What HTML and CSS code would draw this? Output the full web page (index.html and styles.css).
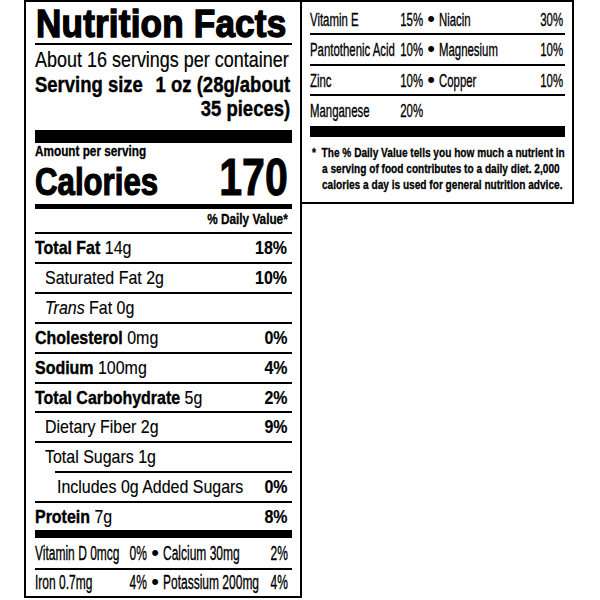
FILE: index.html
```html
<!DOCTYPE html>
<html lang="en">
<head>
<meta charset="utf-8">
<title>Nutrition Facts</title>
<link rel="stylesheet" href="styles.css">
</head>
<body>
<div class="page">
  <section class="label main">
    <h1 class="title"><span class="sx">Nutrition Facts</span></h1>
    <div class="servings"><span class="sx">About 16 servings per container</span></div>
    <div class="size">
      <span class="sx lbl">Serving size</span>
      <span class="sx r val">1 oz (28g/about<br>35 pieces)</span>
    </div>
    <div class="bar bar-lg"></div>
    <div class="cal">
      <div class="cal-left">
        <div class="amount"><span class="sx">Amount per serving</span></div>
        <div class="cal-word"><span class="sx">Calories</span></div>
      </div>
      <div class="cal-num"><span class="sx r">170</span></div>
    </div>
    <div class="bar bar-md"></div>
    <div class="dv"><span class="sx r">% Daily Value*</span></div>

    <div class="row"><span class="sx lbl"><b>Total Fat</b> 14g</span><b class="sx r pct">18%</b></div>
    <div class="row ind"><span class="sx lbl">Saturated Fat 2g</span><b class="sx r pct">10%</b></div>
    <div class="row ind"><span class="sx lbl"><i>Trans</i> Fat 0g</span></div>
    <div class="row"><span class="sx lbl"><b>Cholesterol</b> 0mg</span><b class="sx r pct">0%</b></div>
    <div class="row"><span class="sx lbl"><b>Sodium</b> 100mg</span><b class="sx r pct">4%</b></div>
    <div class="row short"><span class="sx lbl"><b>Total Carbohydrate</b> 5g</span><b class="sx r pct">2%</b></div>
    <div class="row ind"><span class="sx lbl">Dietary Fiber 2g</span><b class="sx r pct">9%</b></div>
    <div class="row ind"><span class="sx lbl">Total Sugars 1g</span></div>
    <div class="row ind2"><span class="sx lbl">Includes 0g Added Sugars</span><b class="sx r pct">0%</b></div>
    <div class="row short"><span class="sx lbl"><b>Protein</b> 7g</span><b class="sx r pct">8%</b></div>

    <div class="bar bar-sm"></div>
    <div class="vrow lv first">
      <span class="c1"><span class="sx v">Vitamin D 0mcg</span></span>
      <span class="c2"><span class="sx v r">0%</span></span>
      <span class="c3">•</span>
      <span class="c4"><span class="sx v">Calcium 30mg</span></span>
      <span class="c5"><span class="sx v r">2%</span></span>
    </div>
    <div class="vrow lv last">
      <span class="c1"><span class="sx v">Iron 0.7mg</span></span>
      <span class="c2"><span class="sx v r">4%</span></span>
      <span class="c3">•</span>
      <span class="c4"><span class="sx v">Potassium 200mg</span></span>
      <span class="c5"><span class="sx v r">4%</span></span>
    </div>
  </section>

  <section class="label side">
    <div class="vrow rv r1">
      <span class="c1"><span class="sx v">Vitamin E</span></span>
      <span class="c2"><span class="sx v r">15%</span></span>
      <span class="c3">•</span>
      <span class="c4"><span class="sx v">Niacin</span></span>
      <span class="c5"><span class="sx v r">30%</span></span>
    </div>
    <div class="vrow rv">
      <span class="c1"><span class="sx v">Pantothenic Acid</span></span>
      <span class="c2"><span class="sx v r">10%</span></span>
      <span class="c3">•</span>
      <span class="c4"><span class="sx v">Magnesium</span></span>
      <span class="c5"><span class="sx v r">10%</span></span>
    </div>
    <div class="vrow rv">
      <span class="c1"><span class="sx v">Zinc</span></span>
      <span class="c2"><span class="sx v r">10%</span></span>
      <span class="c3">•</span>
      <span class="c4"><span class="sx v">Copper</span></span>
      <span class="c5"><span class="sx v r">10%</span></span>
    </div>
    <div class="vrow rv r4">
      <span class="c1"><span class="sx v">Manganese</span></span>
      <span class="c2"><span class="sx v r">20%</span></span>
    </div>
    <div class="bar bar-side"></div>
    <div class="fn">
      <div class="fl"><span class="sx f">*&nbsp; The % Daily Value tells you how much a nutrient in</span></div>
      <div class="fl in"><span class="sx f">a serving of food contributes to a daily diet. 2,000</span></div>
      <div class="fl in"><span class="sx f">calories a day is used for general nutrition advice.</span></div>
    </div>
  </section>
</div>
</body>
</html>
```
FILE: styles.css
```css
* { box-sizing: border-box; }
html, body { margin: 0; padding: 0; background: #fff; }
body {
  font-family: "Liberation Sans", Arial, sans-serif;
  color: #000;
}
b { font-weight: 700; }

.page {
  display: flex;
  align-items: flex-start;
  padding-left: 24px;
}

.label {
  border: 2px solid #000;
}
.main {
  width: 278px;
  padding: 0 8px 0 9px;
}
.side {
  width: 272px;
  border-left: 0;
  padding: 0 7px 0 8px;
}

/* horizontally condensed text */
.sx {
  display: inline-block;
  white-space: nowrap;
  transform: scaleX(var(--s, 0.84));
  transform-origin: left center;
}
.sx.r { transform-origin: right center; }

/* title */
.title {
  display: flex;
  margin: 0;
  padding-top: 2px;
  height: 43px;
  font-size: 39px;
  line-height: 39px;
  font-weight: 700;
  border-bottom: 2px solid #000;
}
.title .sx {
  --s: 0.9;
  -webkit-text-stroke: 1.4px #000;
  letter-spacing: 0.2px;
  margin-left: 1px;
}

.servings {
  display: flex;
  padding-top: 3px;
  font-size: 21.4px;
  line-height: 24px;
}
.servings .sx { -webkit-text-stroke: 0.2px #000; }

.size {
  display: flex;
  padding-top: 1px;
  padding-right: 2px;
  font-size: 22px;
  line-height: 24px;
  font-weight: 700;
}
.size .sx { -webkit-text-stroke: 0.4px #000; }
.size .lbl { min-width: 0; flex: 0 1 auto; }
.size .val {
  margin-left: auto;
  flex: none;
  text-align: right;
}

.bar { background: #000; }
.bar-lg { margin-top: 9px; height: 13px; }
.bar-md { margin-top: 2.5px; height: 5px; }
.bar-sm { height: 8px; }
.bar-side { height: 11px; }

.cal {
  display: flex;
  align-items: last baseline;
  justify-content: space-between;
  padding-right: 4px;
  font-weight: 700;
}
.cal-left { min-width: 0; flex: 0 1 auto; }
.amount {
  display: flex;
  font-size: 14px;
  line-height: 16px;
}
.amount .sx { -webkit-text-stroke: 0.3px #000; }
.cal-word {
  display: flex;
  margin-top: 2.5px;
  font-size: 39px;
  line-height: 40px;
}
.cal-word .sx {
  --s: 0.8;
  -webkit-text-stroke: 1.2px #000;
}
.cal-num {
  flex: none;
  font-size: 52px;
  line-height: 40px;
}
.cal-num .sx {
  --s: 0.79;
  -webkit-text-stroke: 1px #000;
}

.dv {
  display: flex;
  justify-content: flex-end;
  padding: 2px 4px 5px 0;
  font-size: 14px;
  line-height: 16px;
  font-weight: 700;
}
.dv .sx { -webkit-text-stroke: 0.3px #000; }

.row {
  display: flex;
  border-top: 2px solid #000;
  font-size: 19px;
  line-height: 28px;
  padding-right: 4.5px;
}
.row.short { line-height: 27px; }
.row .sx { -webkit-text-stroke: 0.15px #000; }
.row .lbl { min-width: 0; flex: 0 1 auto; }
.row .pct { margin-left: auto; flex: none; }
.row b { -webkit-text-stroke: 0.4px #000; }
.row.ind { padding-left: 10px; }
.row.ind2 { margin-left: 20px; padding-left: 2px; }

/* vitamin rows */
.vrow {
  display: flex;
  align-items: baseline;
}
.vrow > span { flex: none; display: flex; }
.vrow .sx.v { --s: 0.6; -webkit-text-stroke: 0.35px #000; }
.vrow .c2, .vrow .c5 { justify-content: flex-end; }
.vrow .c3 {
  justify-content: center;
  font-size: 22px;
}
.vrow .c4 { flex: 1 1 auto; min-width: 0; }

.lv { font-size: 20px; }
.lv .c1 { width: 92px; }
.lv .c2 { width: 20px; }
.lv .c3 { width: 16px; }
.lv .c5 { width: 24px; padding-right: 4.5px; box-sizing: content-box; }
.lv.first { padding: 1px 0; line-height: 28px; }
.lv.last { border-top: 2px solid #000; line-height: 24px; padding-bottom: 2px; }

.rv {
  font-size: 19px;
  line-height: 27.5px;
  border-top: 2px solid #000;
}
.rv.r1 { border-top: 0; padding-top: 2.5px; }
.rv.r4 { padding: 1px 0 1.5px; }
.rv .c1 { width: 88px; }
.rv .c2 { width: 25px; }
.rv .c3 { width: 16px; }
.rv .c5 { width: 26px; padding-right: 2px; }

/* footnote */
.fn {
  padding: 7.5px 0 9.5px 2px;
  font-size: 13.4px;
  line-height: 16px;
  font-weight: 700;
}
.fl { display: flex; }
.fl.in { padding-left: 10px; }
.fn .sx.f { --s: 0.755; -webkit-text-stroke: 0.3px #000; }
```
